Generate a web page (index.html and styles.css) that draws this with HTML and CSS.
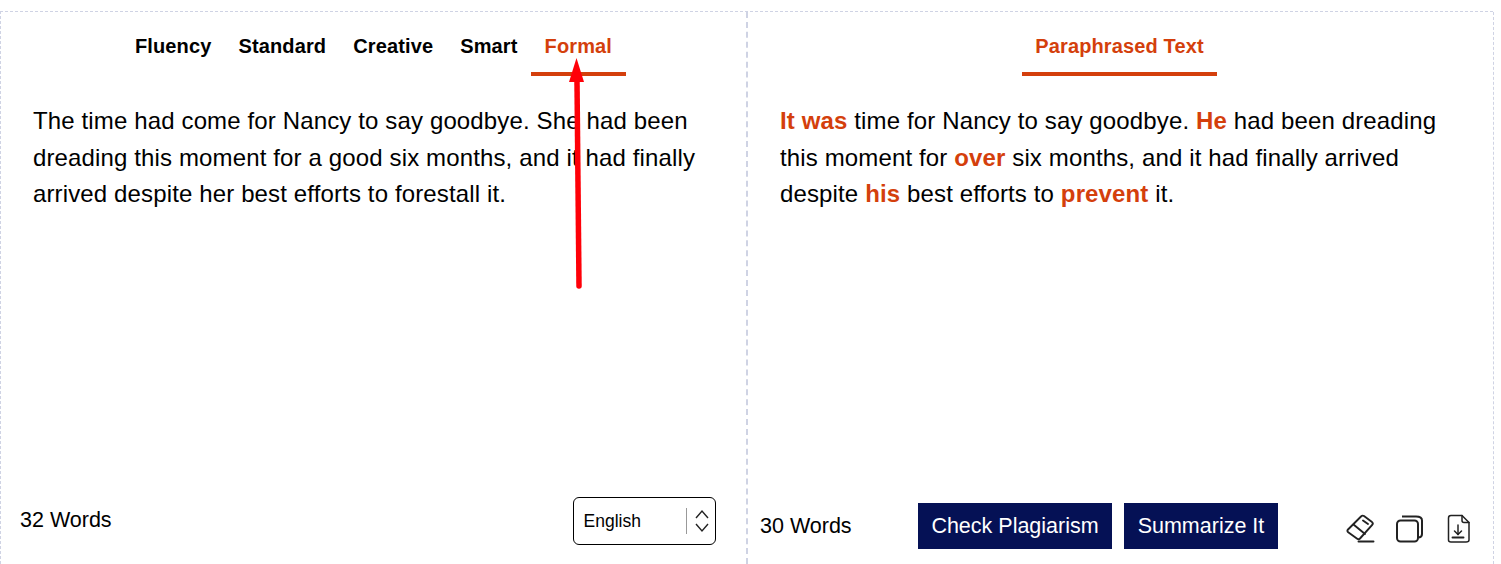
FILE: index.html

```html
<!DOCTYPE html>
<html lang="en">
<head>
  <meta charset="UTF-8" />
  <meta name="viewport" content="width=device-width, initial-scale=1.0"/>
  <title>Paraphrasing Tool</title>
  <link rel="stylesheet" href="styles.css">
</head>
<body>
  <main class="tool">
    <section class="panel panel-left">
      <nav class="tabs">
        <a class="tab" href="#">Fluency</a>
        <a class="tab" href="#">Standard</a>
        <a class="tab" href="#">Creative</a>
        <a class="tab" href="#">Smart</a>
        <a class="tab active" href="#">Formal</a>
      </nav>
      <p class="copy">The time had come for Nancy to say goodbye. She had been dreading this moment for a good six months, and it had finally arrived despite her best efforts to forestall it.</p>
      <div class="foot foot-left">
        <span class="count">32 Words</span>
        <div class="lang">
          <span class="lang-name">English</span>
          <span class="lang-arrows">
            <svg width="16" height="26" viewBox="0 0 16 26" fill="none" stroke="#222" stroke-width="1.400">
              <path d="M2 10 8 3l6 7"/>
              <path d="M2 16l6 7 6-7"/>
            </svg>
          </span>
        </div>
      </div>
    </section>

    <section class="panel panel-right">
      <nav class="tabs">
        <a class="tab tab-wide active" href="#">Paraphrased Text</a>
      </nav>
      <p class="copy"><b>It was</b> time for Nancy to say goodbye. <b>He</b> had been dreading this moment for <b>over</b> six months, and it had finally arrived despite <b>his</b> best efforts to <b>prevent</b> it.</p>
      <div class="foot foot-right">
        <span class="count">30 Words</span>
        <div class="actions">
          <a class="button" href="#">Check Plagiarism</a>
          <a class="button" href="#">Summarize It</a>
        </div>
        <div class="icons">
          <!-- eraser -->
          <svg width="29" height="29" viewBox="0 0 29 29" fill="none" stroke="#222" stroke-width="1.900" stroke-linejoin="round" stroke-linecap="round">
            <path d="M2 15.500 15 2.500q1.500-1.500 3 -.4l8 6q1.500 1.300 .2 2.800L14 24.500q-1.300 1.300-2.800 .2l-9-6.500q-1.500-1.300-.2-2.700z"/>
            <path d="M7.500 10.500 19 20"/>
            <path d="M17 6.500l5 3.500"/>
            <path d="M12.500 27.500h15"/>
          </svg>
          <!-- copy -->
          <svg class="icon-copy" width="28" height="29" viewBox="0 0 28 29" fill="none" stroke="#222" stroke-width="2" stroke-linejoin="round">
            <rect x="2" y="6.500" width="21" height="21" rx="3.500"/>
            <path d="M7 2.500h14q6 0 6 4V20q0 3-3 3.500"/>
          </svg>
          <!-- download file -->
          <svg width="24" height="29" viewBox="0 0 24 29" fill="none" stroke="#222" stroke-width="1.500" stroke-linejoin="round" stroke-linecap="round">
            <path d="M15 1.500H4Q1.500 1.500 1.500 4v22q0 2 2.500 2h15q3 0 3-2V8.500z"/>
            <path d="M15 1.500v5q0 2 2 2h5"/>
            <path d="M11 11v9.500"/>
            <path d="m7.500 17 3.500 3.500 3.500-3.500"/>
            <path d="M5.500 23.500h11" stroke-width="1.900"/>
          </svg>
        </div>
      </div>
    </section>

    <!-- annotation drawn over the screenshot -->
    <svg class="arrow" width="30" height="240" viewBox="0 0 30 240">
      <path d="M18 228 16 24" stroke="#ff0008" stroke-width="5.500" stroke-linecap="round"/>
      <path d="M15.500 0 8 24h15z" fill="#ff0008"/>
    </svg>
  </main>
</body>
</html>
```

FILE: styles.css

```css
* {
  box-sizing: border-box;
}
html, body {
  height: 100%;
}
body {
  margin: 0;
  background: #fff;
  color: #000;
  font-family: "Liberation Sans", Arial, sans-serif;
  overflow: hidden;
}
a {
  color: inherit;
  text-decoration: none;
}
.tool {
  position: relative;
  display: grid;
  grid-template-columns: 747px 746px;
  width: 1493px;
  height: 553px;
  margin-top: 11px;
  border-top: 1px dashed #cfd3e4;
  border-left: 1px dashed #cfd3e4;
}
.panel {
  display: flex;
  flex-direction: column;
  border-right: 2px dashed #cfd3e4;
}
.panel-right {
  border-right: 1px dashed #cfd3e4;
}

/* tabs */
.tabs {
  display: flex;
  justify-content: center;
  height: 64px;
}
.panel-right .tabs {
  padding-right: 2px;
}
.tab {
  display: block;
  height: 64px;
  padding: 23px 13.500px 0;
  border-bottom: 4px solid transparent;
  font-size: 20px;
  font-weight: bold;
  line-height: 23px;
  letter-spacing: .13px;
  white-space: nowrap;
}
.tab.active {
  color: #d43f0c;
  border-bottom-color: #d43f0c;
}
.tab-wide {
  width: 195px;
  padding: 23px 0 0;
  text-align: center;
}

/* text */
.copy {
  flex: 1;
  margin: 0;
  padding: 27px 32px 0;
  font-size: 24px;
  line-height: 36.500px;
  letter-spacing: .135px;
}
.panel-right .copy b {
  color: #d43f0c;
}

/* footer rows */
.foot {
  display: flex;
  align-items: center;
}
.count {
  font-size: 21.500px;
}
.foot-left {
  justify-content: space-between;
  height: 67px;
  padding: 0 30px 19px 19px;
}
.foot-left .count {
  margin-bottom: 2px;
}
.lang {
  display: flex;
  align-items: center;
  width: 143px;
  height: 48px;
  padding: 0 5px 0 9.500px;
  border: 1px solid #000;
  border-radius: 6px;
}
.lang-name {
  flex: 1;
  font-size: 17.500px;
}
.lang-arrows {
  display: flex;
  align-items: center;
  height: 26px;
  padding-left: 7px;
  border-left: 1px solid #999;
}
.foot-right {
  height: 67px;
  padding: 0 0 10px 12px;
}
.foot-right .count {
  margin-top: 1px;
}
.actions {
  display: flex;
  gap: 11.500px;
  margin-left: 66px;
}
.button {
  display: block;
  height: 46px;
  padding: 0 13.750px;
  background: #051155;
  color: #fff;
  font-size: 21.500px;
  line-height: 46px;
}
.icons {
  display: flex;
  align-items: center;
  gap: 24px;
  margin-left: 68px;
  padding-top: 6px;
}
.icon-copy {
  margin-left: -4px;
}

/* annotation */
.arrow {
  position: absolute;
  left: 560px;
  top: 46px;
}
```
